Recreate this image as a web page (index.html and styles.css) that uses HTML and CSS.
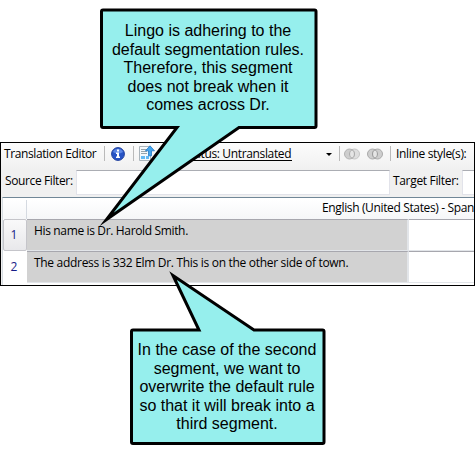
FILE: index.html
```
<!DOCTYPE html>
<html lang="en">
<head>
<meta charset="utf-8">
<title>Translation Editor</title>
<link rel="stylesheet" href="styles.css">
</head>
<body>
<main class="editor">
  <div class="toolbar">
    <span class="title">Translation Editor</span>
    <i class="divider"></i>
    <svg class="info" width="14" height="14" viewBox="0 0 14 14"><circle cx="7" cy="7" r="6.4" fill="#2854c5" stroke="#21409c"/><path d="M2 5a5.5 5.5 0 0 1 10 0Q7 8 2 5" fill="#5c87e5"/><path d="M6 2.5h2v2H6zM5 5.6h3v4h1v1.5H5V9.600h1V7H5z" fill="#fff"/></svg>
    <i class="divider"></i>
    <svg class="export" width="16" height="17" viewBox="0 0 16 17"><path d="M.5 1.500h11v14H.5z" fill="#f5f9fc" stroke="#aab4bb"/><path d="M2 4.500h6M2 6.500h6M2 8.500h6" stroke="#98a5ad"/><path d="M2 11h4v3H2zM7 11h3v3H7z" fill="#65baf4"/><path d="M11 .8l4.500 5h-3v5h-3v-5h-3z" fill="#42a5ed" stroke="#2478c6" stroke-width=".8"/></svg>
    <span class="status">Status: Untranslated</span>
    <i class="arrow"></i>
    <i class="divider"></i>
    <svg class="rings" width="16" height="12" viewBox="0 0 16 12"><circle cx="10.500" cy="6" r="5" fill="#dedede" stroke="#c5c5c5"/><circle cx="5.500" cy="6" r="5" fill="#cecece" stroke="#b2b2b2"/><path d="M8 1.700a5 5 0 0 1 0 8.600a5 5 0 0 1 0-8.600" fill="#e5e5e5" stroke="#aaa"/></svg>
    <svg class="rings" width="16" height="12" viewBox="0 0 16 12"><circle cx="5.500" cy="6" r="5" fill="#cecece" stroke="#aaa"/><circle cx="10.500" cy="6" r="5" fill="#cecece" stroke="#aaa"/><path d="M8 1.700a5 5 0 0 1 0 8.600a5 5 0 0 1 0-8.600" fill="#e5e5e5" stroke="#999"/></svg>
    <i class="divider"></i>
    <span class="inline-label">Inline style(s):</span>
  </div>
  <div class="filters">
    <span class="source-label">Source Filter:</span><div class="field"></div>
    <span class="target-label">Target Filter:</span><div class="field"></div>
  </div>
  <div class="grid">
    <div class="corner"></div><div class="heading"><span>English (United States) - Span</span></div>
    <div class="num current">1</div><div class="cell"><span class="first">His name is Dr. Harold Smith.</span></div><div class="target"></div>
    <div class="num">2</div><div class="cell"><span class="second">The address is 332 Elm Dr. This is on the other side of town.</span></div><div class="target"></div>
  </div>
</main>
<svg class="bubbles" width="475" height="454" viewBox="0 0 475 454">
  <path d="M103 10H314.500Q316 10 316 11.500V126Q316 127.500 314.500 127.500H239L106.500 219.500L177 127.500H103Q101.500 127.500 101.500 126V11.500Q101.500 10 103 10Z"/>
  <path d="M133 330H199L173 275.500L254 330H322.500Q324 330 324 331.500V442Q324 443.500 322.500 443.500H133Q131.500 443.500 131.500 442V331.500Q131.500 330 133 330Z"/>
</svg>
<p class="note note-top">Lingo is adhering to the<br>default segmentation rules.<br>Therefore, this segment<br>does not break when it<br>comes across Dr.</p>
<p class="note note-bottom">In the case of the second<br>segment, we want to<br>overwrite the default rule<br>so that it will break into a<br>third segment.</p>
</body>
</html>
```
FILE: styles.css
```
* { box-sizing: border-box; }
body {
  margin: 0;
  width: 475px;
  height: 454px;
  padding-top: 142px;
  overflow: hidden;
  position: relative;
  background: #fff;
  color: #000;
  font: 12px/16px "Open Sans", sans-serif;
}
.editor {
  height: 144px;
  border: 1px solid #000;
  background: #f0f0f0;
  overflow: hidden;
  white-space: nowrap;
}
.toolbar {
  height: 27px;
  padding: 0 0 6px 3px;
  display: flex;
  align-items: center;
  background: linear-gradient(#fcfcfc, #f0f0f0);
}
.toolbar > * { flex: none; }
.title { width: 100px; letter-spacing: -.39px; }
.divider { width: 1px; height: 15px; background: #bababa; }
.info { margin: 0 8px 0 6px; }
.export { margin: 0 29px 0 5px; }
.status {
  width: 108px;
  height: 15px;
  line-height: 15px;
  border-bottom: 1px solid #000;
  letter-spacing: -.35px;
}
.arrow {
  margin: 2px 7px 0 34px;
  border: 3px solid transparent;
  border-top-color: #000;
  border-bottom: 0;
}
.rings { margin-left: 4px; }
.rings + .rings { margin: 0 7px; }
.inline-label { margin-left: 5px; letter-spacing: -.33px; }
.filters {
  height: 27px;
  display: flex;
  padding-left: 4px;
}
.filters span { flex: none; padding-top: 3px; }
.source-label { width: 71px; letter-spacing: -.38px; }
.target-label { width: 69px; margin-left: 3px; letter-spacing: -.33px; }
.source-label + .field { margin-right: 0; }
.field {
  width: 314px;
  height: 25px;
  flex: none;
  background: #fff;
  border: 1px solid #e2e3ea;
  border-top-color: #abadb3;
}
.grid {
  margin-left: 1px;
  height: 88px;
  border-top: 1px solid #718797;
  border-left: 1px solid #d7dde2;
  padding-top: 2px;
  display: grid;
  grid-template-columns: 24px 382px 1fr;
  grid-template-rows: 19px 32px 32px;
  background: #fff;
}
.corner { border-right: 1px solid #d5dae1; background: linear-gradient(#fff, #f5f6f8); }
.heading {
  grid-column: 2 / 4;
  min-width: 0;
  padding-left: 295px;
  background: linear-gradient(#fff, #f5f6f8);
  letter-spacing: -.36px;
}
.num {
  padding: 8px 2px 0 0;
  text-align: center;
  color: #171c87;
}
.current {
  background: linear-gradient(#f9f9fa, #e8e8eb);
  border: 1px solid #c5c5ca;
  border-radius: 2px;
  padding-top: 7px;
}
.cell {
  background: #d2d2d2;
  border-top: 1px solid #a7a7ae;
  border-right: 2px solid #e2e5e9;
  border-bottom: 1px solid #e2e5e9;
  padding: 3px 0 0 7px;
}
.target { border-top: 1px solid #a7a7ae; border-bottom: 1px solid #e2e5e9; }
.first { letter-spacing: -.35px; }
.second { letter-spacing: -.305px; }
.bubbles { position: absolute; top: 0; left: 0; }
.bubbles path { fill: #96efed; stroke: #000; stroke-width: 3px; stroke-miterlimit: 10; }
.note {
  position: absolute;
  margin: 0;
  text-align: center;
  font: 16px/18.500px "Liberation Sans", Arial, sans-serif;
}
.note-top { left: 102px; top: 22px; width: 212px; }
.note-bottom { left: 132px; top: 341px; width: 190px; white-space: nowrap; }
```
